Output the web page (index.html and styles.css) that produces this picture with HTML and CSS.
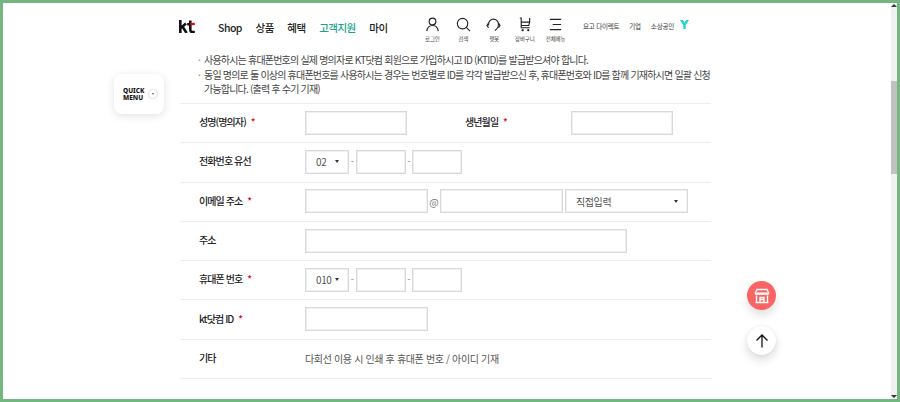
FILE: index.html
```html
<!DOCTYPE html>
<html lang="ko">
<head>
<meta charset="utf-8">
<title>KT 고객지원</title>
<link rel="stylesheet" href="styles.css">
</head>
<body>
<div class="frame">
  <div class="viewport">
    <div class="page">
      <header class="header">
        <div class="logo"><svg viewBox="0 0 16 13" width="16" height="13"><path class="k" d="M1.300 0v13M1.500 8.200 7 3.400M3.400 6.400 7.600 13"/><path class="t" d="M11.300 .5v9.300c0 1.600.9 2.200 2.300 2.200h2.200M8.200 4.200h3"/><path class="t-red" d="M11.300 4.200 15.800 3.800"/></svg></div>
        <nav class="nav">
          <a>Shop</a><a>상품</a><a>혜택</a><a class="active">고객지원</a><a>마이</a>
        </nav>
        <div class="tools">
          <div class="tool"><svg viewBox="0 0 16 16" width="15" height="15"><circle cx="8" cy="4.800" r="3.600"/><path d="M1.800 15c.6-4 3-6 6.200-6s5.600 2 6.200 6"/></svg><span>로그인</span></div>
          <div class="tool"><svg viewBox="0 0 16 16" width="15" height="15"><circle cx="7" cy="7" r="5.600"/><path d="M11 11 15 15"/></svg><span>검색</span></div>
          <div class="tool"><svg viewBox="0 0 16 16" width="15" height="15"><path d="M2.700 9V7.600a5.300 5.300 0 0 1 10.600 0c0 2.400-.4 3.600-1.600 4.900L9.500 14.500"/><path d="M2.700 6.500 1 9l1.700 2.500M13.300 6.500 15 9l-1.700 2.500"/></svg><span>챗봇</span></div>
          <div class="tool"><svg viewBox="0 0 16 16" width="15" height="15"><path d="M3 1h1.500v10.500h9M4.500 5.500h9V1M4.500 9h8l1-3.500"/><circle class="dot" cx="6" cy="14" r="1.200"/><circle class="dot" cx="12" cy="14" r="1.200"/></svg><span>장바구니</span></div>
          <div class="tool"><svg viewBox="0 0 16 16" width="15" height="15"><path d="M2 2.500h12M5 8h9M2 13.500h12"/></svg><span>전체메뉴</span></div>
        </div>
        <div class="links">
          <a>요고 다이렉트</a><a>기업</a><a>소상공인</a>
          <svg class="ylogo" viewBox="0 0 10 10" width="9" height="9"><path d="M0 0h3.200L5 3 6.800 0H10L6.300 5.800V10H3.700V5.800z"/></svg>
        </div>
      </header>

      <ul class="notes">
        <li>사용하시는 휴대폰번호의 실제 명의자로 KT닷컴 회원으로 가입하시고 ID (KTID)를 발급받으셔야 합니다.</li>
        <li>동일 명의로 둘 이상의 휴대폰번호를 사용하시는 경우는 번호별로 ID를 각각 발급받으신 후, 휴대폰번호와 ID를 함께 기재하시면 일괄 신청 가능합니다. (출력 후 수기 기재)</li>
      </ul>

      <div class="form">
        <div class="row">
          <div class="label">성명(명의자) <em>*</em></div>
          <div class="field"><div class="box w-name"></div></div>
          <div class="label label-second">생년월일 <em>*</em></div>
          <div class="box w-name"></div>
        </div>
        <div class="row">
          <div class="label">전화번호 유선</div>
          <div class="field">
            <div class="box select w-select">02<i class="caret"></i></div>
            <span class="sep">-</span><div class="box w-part"></div>
            <span class="sep">-</span><div class="box w-part"></div>
          </div>
        </div>
        <div class="row">
          <div class="label">이메일 주소 <em>*</em></div>
          <div class="field">
            <div class="box w-mail"></div><span class="at">@</span><div class="box w-mail"></div>
            <div class="box select w-mail select-mail">직접입력<i class="caret"></i></div>
          </div>
        </div>
        <div class="row">
          <div class="label">주소</div>
          <div class="field"><div class="box w-addr"></div></div>
        </div>
        <div class="row">
          <div class="label">휴대폰 번호 <em>*</em></div>
          <div class="field">
            <div class="box select w-select">010<i class="caret"></i></div>
            <span class="sep">-</span><div class="box w-part"></div>
            <span class="sep">-</span><div class="box w-part"></div>
          </div>
        </div>
        <div class="row">
          <div class="label">kt닷컴 ID <em>*</em></div>
          <div class="field"><div class="box w-mail"></div></div>
        </div>
        <div class="row">
          <div class="label">기타</div>
          <div class="field plain">다회선 이용 시 인쇄 후 휴대폰 번호 / 아이디 기재</div>
        </div>
      </div>
    </div>

    <div class="quick"><span>QUICK<br>MENU</span><i class="quick-btn"></i></div>

    <div class="fab fab-store">
      <svg viewBox="0 0 16 16" width="16" height="16"><path d="M3 1.500h10l1.800 3.700c0 1.500-2.600 1.500-2.600 0 0 1.500-2.800 1.500-2.800 0 0 1.500-2.800 1.500-2.800 0 0 1.500-2.800 1.500-2.800 0 0 1.500-2.600 1.500-2.600 0z"/><path d="M1.200 5.200h13.600M2.500 7.500v7h11v-7M1.500 14.500h13M6 14.500V9.500h4v5M6 11.500h4"/></svg>
    </div>
    <div class="fab fab-top">
      <svg viewBox="0 0 16 16" width="16" height="16"><path d="M8 14.500V2M2.500 7.500 8 2l5.500 5.500"/></svg>
    </div>

    <div class="scrollbar"><i class="arrow-up"></i><i class="thumb"></i><i class="arrow-down"></i></div>
  </div>
</div>
</body>
</html>
```

FILE: styles.css
```css
* { box-sizing: border-box; }
html, body { margin: 0; height: 100%; }
body {
  font-family: "Noto Sans CJK KR", "Noto Sans", sans-serif;
  color: #333;
  background: #fff;
  overflow: hidden;
}
.frame { height: 402px; border: 3px solid #72b77f; }
.viewport { position: relative; height: 100%; overflow: hidden; background: #fff; }
.page { width: 531px; margin-left: 177px; }

.header { display: flex; align-items: flex-start; height: 47px; white-space: nowrap; }
.logo { width: 39px; flex: none; margin-top: 17px; margin-left: -1px; line-height: 0; }
.logo svg { fill: none; }
.logo .k { stroke: #111; stroke-width: 2.600; }
.logo .t { stroke: #111; stroke-width: 2.600; }
.logo .t-red { stroke: #e60012; stroke-width: 2.200; }
.nav { display: flex; flex: none; width: 199px; gap: 13.500px; margin-top: 16px; font-size: 10.500px; line-height: 17px; font-weight: 500; letter-spacing: -0.500px; color: #222; }
.active { color: #1aa38c; }
.tools { display: flex; flex: none; margin-top: 14px; }
.tool { width: 30.800px; display: flex; flex-direction: column; align-items: center; gap: 3px; }
.tool svg { fill: none; stroke: #222; stroke-width: 1.200; }
.tool .dot { fill: #222; stroke: none; }
.tool span { font-size: 5.500px; line-height: 8px; color: #444; letter-spacing: -0.200px; }
.links { display: flex; flex: none; align-items: center; gap: 10px; margin-left: 12px; margin-top: 18px; font-size: 6.500px; line-height: 10px; letter-spacing: -0.200px; color: #333; }
.ylogo { fill: #22d3d0; margin-left: -4px; margin-top: -3px; }

.notes { list-style: none; margin: 0; padding: 3px 0 0 24px; font-size: 10px; line-height: 14.500px; letter-spacing: -0.800px; color: #444; height: 53px; }
.notes li { position: relative; }
.notes li::before { content: "·"; position: absolute; left: -6px; color: #888; }

.form { border-top: 1px solid #eee; }
.row { display: flex; align-items: center; height: 39.300px; border-bottom: 1px solid #eee; padding-left: 19px; }
.label { width: 106px; flex: none; font-size: 10px; line-height: 14px; margin-top: -2px; font-weight: 500; letter-spacing: -0.900px; color: #222; white-space: nowrap; }
.label em { font-style: normal; color: #e60012; margin-left: 3px; }
.label-second { margin-left: 58px; }
.field { display: flex; align-items: center; margin-top: -1px; }
.box { height: 24px; border: 1px solid #d9d9d9; box-shadow: inset 0 0 0 1px #f0f0f0; background: #fff; flex: none; }
.w-name { width: 102px; }
.w-select { width: 44px; }
.w-part { width: 50px; }
.w-mail { width: 123px; }
.w-addr { width: 322px; }
.select { display: flex; align-items: center; justify-content: space-between; padding: 0 9px 0 10px; font-size: 10px; letter-spacing: -0.400px; color: #555; }
.select-mail { margin-left: 2px; }
.caret { width: 0; height: 0; border: 2.500px solid transparent; border-top: 3px solid #333; border-bottom: 0; }
.sep { width: 6.500px; text-align: center; font-size: 9px; color: #777; }
.at { width: 12px; text-align: center; font-size: 10px; color: #777; }
.plain { font-size: 10px; letter-spacing: -0.350px; color: #555; }

.quick {
  position: absolute; left: 111px; top: 71px; width: 50px; height: 40px;
  display: flex; align-items: center; padding: 0 0 0 9px; gap: 5px;
  background: #fff; border-radius: 8px; box-shadow: 0 2px 8px rgba(0,0,0,.12);
  font: 800 6.500px/7.500px "Noto Sans", sans-serif; color: #111;
}
.quick-btn {
  position: relative; flex: none; width: 8px; height: 8px; border-radius: 50%; background: #fff; box-shadow: 0 0 2px rgba(0,0,0,.3);
}
.quick-btn::after {
  content: ""; position: absolute; left: 2.500px; top: 3px; border: 1.500px solid transparent; border-top: 2px solid #555; border-bottom: 0;
}

.fab {
  position: absolute; left: 744px; width: 29px; height: 29px; border-radius: 50%;
  display: flex; align-items: center; justify-content: center; box-shadow: 0 5px 10px rgba(0,0,0,.12);
}
.fab svg { fill: none; stroke-width: 1.300; }
.fab-store { top: 278px; background: #f96565; }
.fab-store svg { stroke: #fff; }
.fab-top { top: 323px; background: #fff; box-shadow: 0 5px 10px rgba(0,0,0,.14), 0 0 2px rgba(0,0,0,.1); }
.fab-top svg { stroke: #111; }

.scrollbar { position: absolute; top: 0; right: 0; width: 6px; height: 100%; background: #f1f1f1; }
.thumb { position: absolute; top: 78px; left: 0; width: 100%; height: 93px; background: #c1c1c1; }
.arrow-up, .arrow-down { position: absolute; left: 0; width: 0; height: 0; border: 3px solid transparent; }
.arrow-up { top: 1px; border-top: 0; border-bottom: 3px solid #333; }
.arrow-down { bottom: 1px; border-bottom: 0; border-top: 3px solid #333; }
```
